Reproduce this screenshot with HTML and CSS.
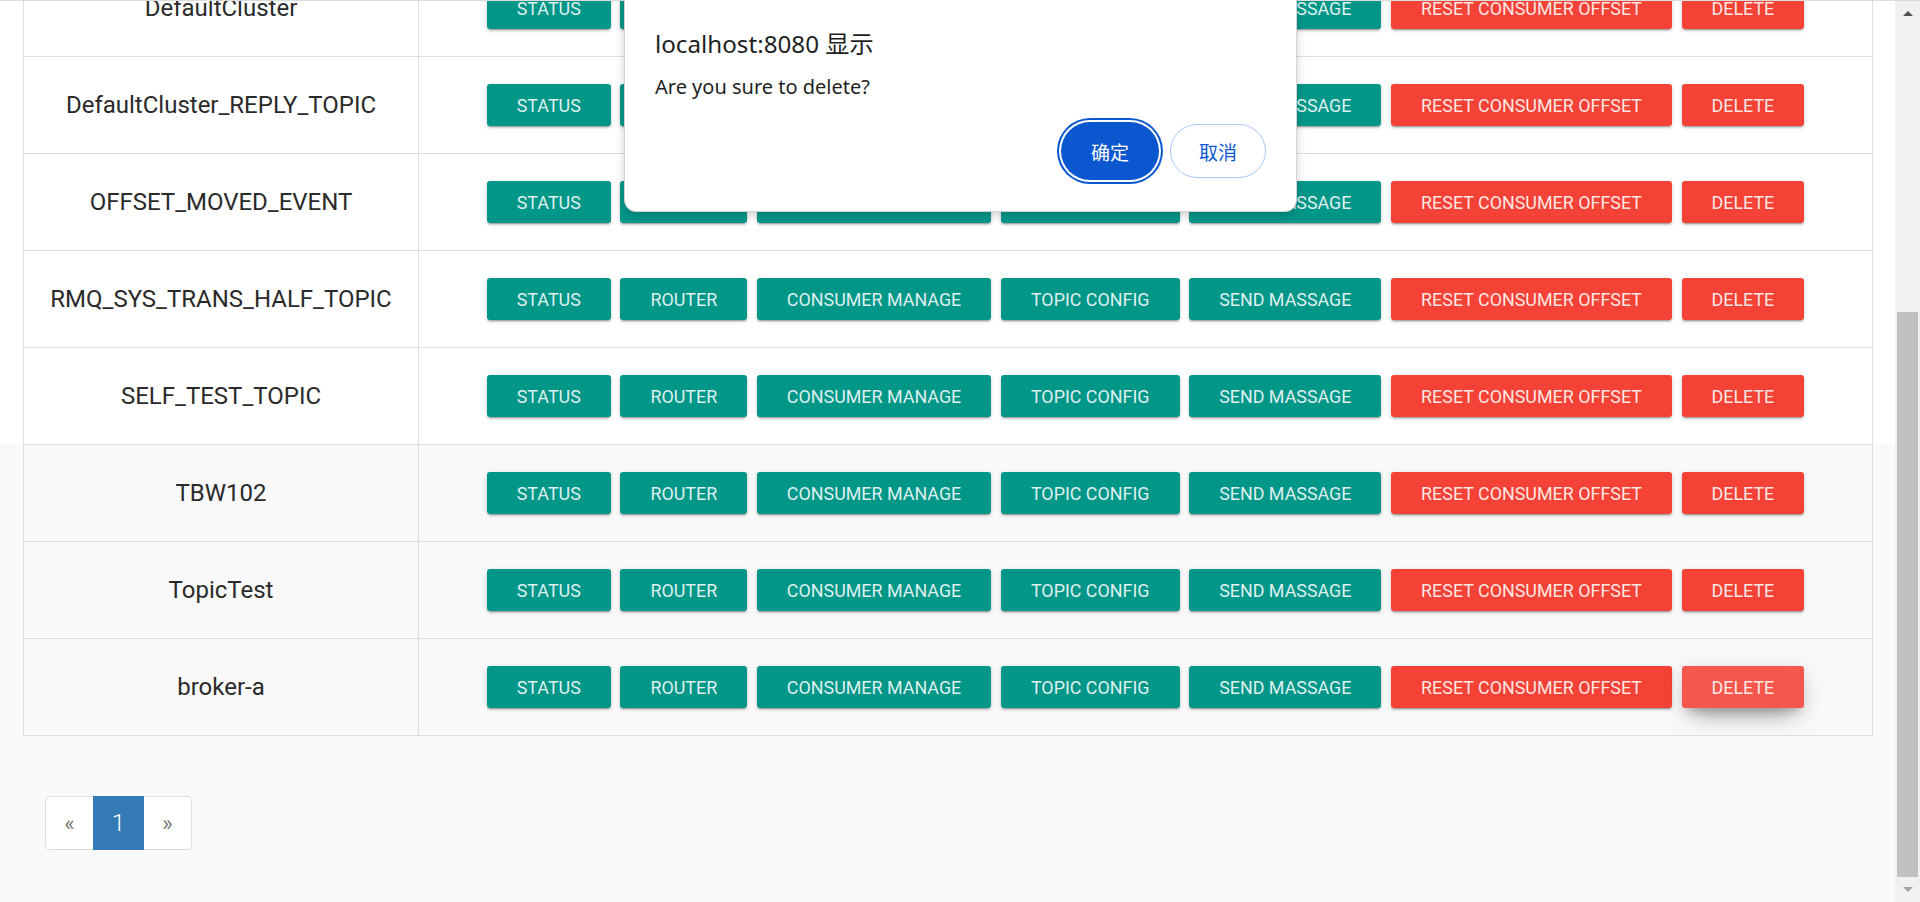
FILE: index.html
```html
<!DOCTYPE html>
<html lang="en">
<head>
<meta charset="utf-8">
<title>Topic</title>
<link rel="stylesheet" href="styles.css">
</head>
<body>
<div class="app">
  <div class="viewport">
    <div class="page">
      <div class="topic-table">
        <div class="row"><div class="name">DefaultCluster</div><div class="ops"><button class="btn teal">Status</button><button class="btn teal">Router</button><button class="btn teal">Consumer Manage</button><button class="btn teal">Topic Config</button><button class="btn teal">Send Massage</button><button class="btn red">Reset Consumer Offset</button><button class="btn red">Delete</button></div></div>
        <div class="row"><div class="name">DefaultCluster_REPLY_TOPIC</div><div class="ops"><button class="btn teal">Status</button><button class="btn teal">Router</button><button class="btn teal">Consumer Manage</button><button class="btn teal">Topic Config</button><button class="btn teal">Send Massage</button><button class="btn red">Reset Consumer Offset</button><button class="btn red">Delete</button></div></div>
        <div class="row"><div class="name">OFFSET_MOVED_EVENT</div><div class="ops"><button class="btn teal">Status</button><button class="btn teal">Router</button><button class="btn teal">Consumer Manage</button><button class="btn teal">Topic Config</button><button class="btn teal">Send Massage</button><button class="btn red">Reset Consumer Offset</button><button class="btn red">Delete</button></div></div>
        <div class="row"><div class="name">RMQ_SYS_TRANS_HALF_TOPIC</div><div class="ops"><button class="btn teal">Status</button><button class="btn teal">Router</button><button class="btn teal">Consumer Manage</button><button class="btn teal">Topic Config</button><button class="btn teal">Send Massage</button><button class="btn red">Reset Consumer Offset</button><button class="btn red">Delete</button></div></div>
        <div class="row"><div class="name">SELF_TEST_TOPIC</div><div class="ops"><button class="btn teal">Status</button><button class="btn teal">Router</button><button class="btn teal">Consumer Manage</button><button class="btn teal">Topic Config</button><button class="btn teal">Send Massage</button><button class="btn red">Reset Consumer Offset</button><button class="btn red">Delete</button></div></div>
        <div class="row"><div class="name">TBW102</div><div class="ops"><button class="btn teal">Status</button><button class="btn teal">Router</button><button class="btn teal">Consumer Manage</button><button class="btn teal">Topic Config</button><button class="btn teal">Send Massage</button><button class="btn red">Reset Consumer Offset</button><button class="btn red">Delete</button></div></div>
        <div class="row"><div class="name">TopicTest</div><div class="ops"><button class="btn teal">Status</button><button class="btn teal">Router</button><button class="btn teal">Consumer Manage</button><button class="btn teal">Topic Config</button><button class="btn teal">Send Massage</button><button class="btn red">Reset Consumer Offset</button><button class="btn red">Delete</button></div></div>
        <div class="row"><div class="name">broker-a</div><div class="ops"><button class="btn teal">Status</button><button class="btn teal">Router</button><button class="btn teal">Consumer Manage</button><button class="btn teal">Topic Config</button><button class="btn teal">Send Massage</button><button class="btn red">Reset Consumer Offset</button><button class="btn red hover">Delete</button></div></div>
      </div>
      <ul class="pagination">
        <li class="pg-prev"><a>«</a></li>
        <li class="pg-active"><a>1</a></li>
        <li class="pg-next"><a>»</a></li>
      </ul>
    </div>
  </div>
  <div class="scrollbar">
    <div class="sb-btn"><span class="tri-up"></span></div>
    <div class="sb-track"><div class="sb-thumb"></div></div>
    <div class="sb-btn"><span class="tri-down"></span></div>
  </div>
  <div class="dialog">
    <div class="dlg-title">localhost:8080 显示</div>
    <div class="dlg-msg">Are you sure to delete?</div>
    <div class="dlg-actions">
      <button class="dlg-ok">确定</button>
      <button class="dlg-cancel">取消</button>
    </div>
  </div>
</div>
</body>
</html>
```
FILE: styles.css
```css
html, body {
  margin: 0;
  padding: 0;
  height: 902px;
  overflow: hidden;
}
body {
  font-family: Roboto, "Noto Sans", sans-serif;
  color: #333;
}
.app {
  position: relative;
  display: flex;
  height: 902px;
  border-top: 1px solid #dcdcdc;
  box-sizing: border-box;
}
.viewport {
  flex: 1;
  overflow: hidden;
  background: linear-gradient(#ffffff 0, #ffffff 443px, #f9f9f9 443px);
}
.page {
  margin-top: -41px;
  padding: 0 22px 0 23px;
}
.topic-table {
  border-left: 1px solid #dddddd;
  border-right: 1px solid #dddddd;
}
.row {
  display: grid;
  grid-template-columns: 395px 1fr;
  height: 97px;
  box-sizing: border-box;
  border-bottom: 1px solid #dddddd;
}
.name {
  display: flex;
  align-items: center;
  justify-content: center;
  border-right: 1px solid #dddddd;
  font-size: 24px;
  font-weight: 400;
  color: #2a2a2a;
}
.ops {
  display: flex;
  align-items: center;
  justify-content: center;
  gap: 9.6px;
}
.btn {
  height: 42px;
  padding: 0 30px;
  border: 0;
  border-radius: 3px;
  font-family: Roboto, sans-serif;
  font-size: 17.9px;
  font-weight: 400;
  text-transform: uppercase;
  color: rgba(255, 255, 255, 0.88);
  box-shadow: 0 2px 2px 0 rgba(0,0,0,.14), 0 3px 1px -2px rgba(0,0,0,.2), 0 1px 5px 0 rgba(0,0,0,.12);
  cursor: pointer;
}
.teal { background: #009688; }
.red { background: #f44336; }
.red.hover {
  background: #f5574c;
  box-shadow: 0 14px 26px -12px rgba(0,0,0,.42), 0 4px 23px 0 rgba(0,0,0,.12), 0 8px 10px -5px rgba(0,0,0,.2);
}
.pagination {
  list-style: none;
  display: flex;
  margin: 60px 0 0 22px;
  padding: 0;
}
.pagination li a {
  display: flex;
  align-items: center;
  justify-content: center;
  height: 54px;
  box-sizing: border-box;
  background: #fff;
  border: 1px solid #dddddd;
  color: #777;
  font-size: 22px;
}
.pg-prev a {
  width: 48px;
  border-right: 0 !important;
  border-radius: 5px 0 0 5px;
}
.pg-active a {
  width: 51px;
  background: #337ab7 !important;
  border-color: #337ab7 !important;
  color: #fff !important;
  font-size: 24px !important;
  font-weight: 300;
}
.pg-next a {
  width: 48px;
  border-left: 0 !important;
  border-radius: 0 5px 5px 0;
}
.scrollbar {
  width: 25px;
  background: #f1f1f1;
  display: flex;
  flex-direction: column;
}
.sb-btn {
  height: 25px;
  display: flex;
  align-items: center;
  justify-content: center;
}
.tri-up {
  width: 0;
  height: 0;
  border-left: 5px solid transparent;
  border-right: 5px solid transparent;
  border-bottom: 5px solid #505050;
}
.tri-down {
  width: 0;
  height: 0;
  border-left: 5px solid transparent;
  border-right: 5px solid transparent;
  border-top: 5px solid #a3a3a3;
}
.sb-track {
  flex: 1;
  display: flex;
  flex-direction: column;
  justify-content: flex-end;
}
.sb-thumb {
  height: 565px;
  margin: 0 2.5px 0 2px;
  background: #c1c1c1;
}
.dialog {
  position: absolute;
  left: 624px;
  top: -14px;
  width: 673px;
  height: 225px;
  box-sizing: border-box;
  background: #fff;
  border: 1px solid #d4d4d4;
  border-radius: 12px;
  box-shadow: 0 3px 10px rgba(0,0,0,.18);
  padding: 40px 30px 0 30px;
  font-family: "Noto Sans", "Noto Sans CJK SC", sans-serif;
  color: #1f1f1f;
}
.dlg-title {
  font-size: 24.2px;
  line-height: 32px;
}
.dlg-msg {
  font-size: 20px;
  line-height: 28px;
  margin-top: 13px;
}
.dlg-actions {
  display: flex;
  justify-content: flex-end;
  align-items: center;
  gap: 11px;
  margin-top: 21px;
}
.dlg-ok, .dlg-cancel {
  font-family: "Noto Sans CJK SC", sans-serif;
  font-size: 19px;
  cursor: pointer;
}
.dlg-ok {
  width: 98px;
  height: 58px;
  border: 0;
  border-radius: 29px;
  background: #0b57d0;
  color: #fff;
  box-shadow: 0 0 0 2px #fff, 0 0 0 4px #0b57d0;
}
.dlg-cancel {
  width: 96px;
  height: 54px;
  border: 1px solid #a8c7fa;
  border-radius: 27px;
  background: #fff;
  color: #0b57d0;
}
```
